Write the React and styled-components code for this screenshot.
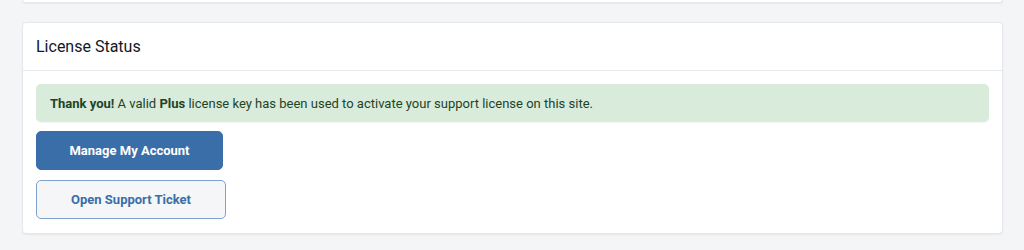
import React from 'react';
import styled, { createGlobalStyle } from 'styled-components';

const GlobalStyle = createGlobalStyle`
html {
  box-sizing: border-box;
}
*, *:before, *:after {
  box-sizing: inherit;
}
body {
  margin: 0;
  background: #f4f5f7;
  font-family: Roboto, "Liberation Sans", sans-serif;
  color: #1d2327;
}
`

const Page = styled.div`
  display: flex;
  flex-direction: column;
  gap: 19px;
  padding: 0 21px 16px 22px;
`;

const CardTail = styled.div`
  height: 3px;
  background: #fff;
  border: 1px solid #e6e7ea;
  border-top: none;
  border-radius: 0 0 4px 4px;
  box-shadow: 0 1px 2px rgba(0, 0, 0, 0.05);
`;

const Card = styled.section`
  background: #fff;
  border: 1px solid #e6e7ea;
  border-radius: 4px;
  box-shadow: 0 1px 2px rgba(0, 0, 0, 0.06);
`;

const CardHeader = styled.h2`
  margin: 0;
  height: 48px;
  display: flex;
  align-items: center;
  padding: 0 13px;
  font-size: 16px;
  font-weight: 400;
  color: #111827;
  border-bottom: 1px solid #e8e9ec;
`;

const CardBody = styled.div`
  display: flex;
  flex-direction: column;
  align-items: flex-start;
  padding: 13px 13px 14px;
`;

const Notice = styled.div`
  align-self: stretch;
  height: 38px;
  display: flex;
  align-items: center;
  white-space: pre;
  padding: 0 14px;
  background: #d9ebdb;
  border-radius: 5px;
  box-shadow: 0 1px 1px rgba(0, 0, 0, 0.04);
  color: #1e4426;
  font-size: 13px;
  margin-bottom: 9px;

  b {
    font-weight: 700;
  }
`;

const Button = styled.button`
  width: ${p => p.$width}px;
  height: 39px;
  border-radius: 5px;
  font-family: inherit;
  font-size: 13px;
  font-weight: 700;
  cursor: pointer;
  margin-bottom: ${p => p.$last ? 0 : 10}px;
  background: ${p => p.$primary ? '#3a6ea9' : '#f4f6f7'};
  color: ${p => p.$primary ? '#fff' : '#3a6ea9'};
  border: 1px solid ${p => p.$primary ? '#3a6ea9' : '#7fa1cd'};
`;

export default function App() {
  return (
    <Page>
      <GlobalStyle />
      <CardTail />
      <Card>
        <CardHeader>License Status</CardHeader>
        <CardBody>
          <Notice>
            <b>Thank you!</b> A valid <b>Plus</b> license key has been used to activate your support license on this site.
          </Notice>
          <Button $primary $width={187}>Manage My Account</Button>
          <Button $width={190} $last>Open Support Ticket</Button>
        </CardBody>
      </Card>
    </Page>
  );
}
